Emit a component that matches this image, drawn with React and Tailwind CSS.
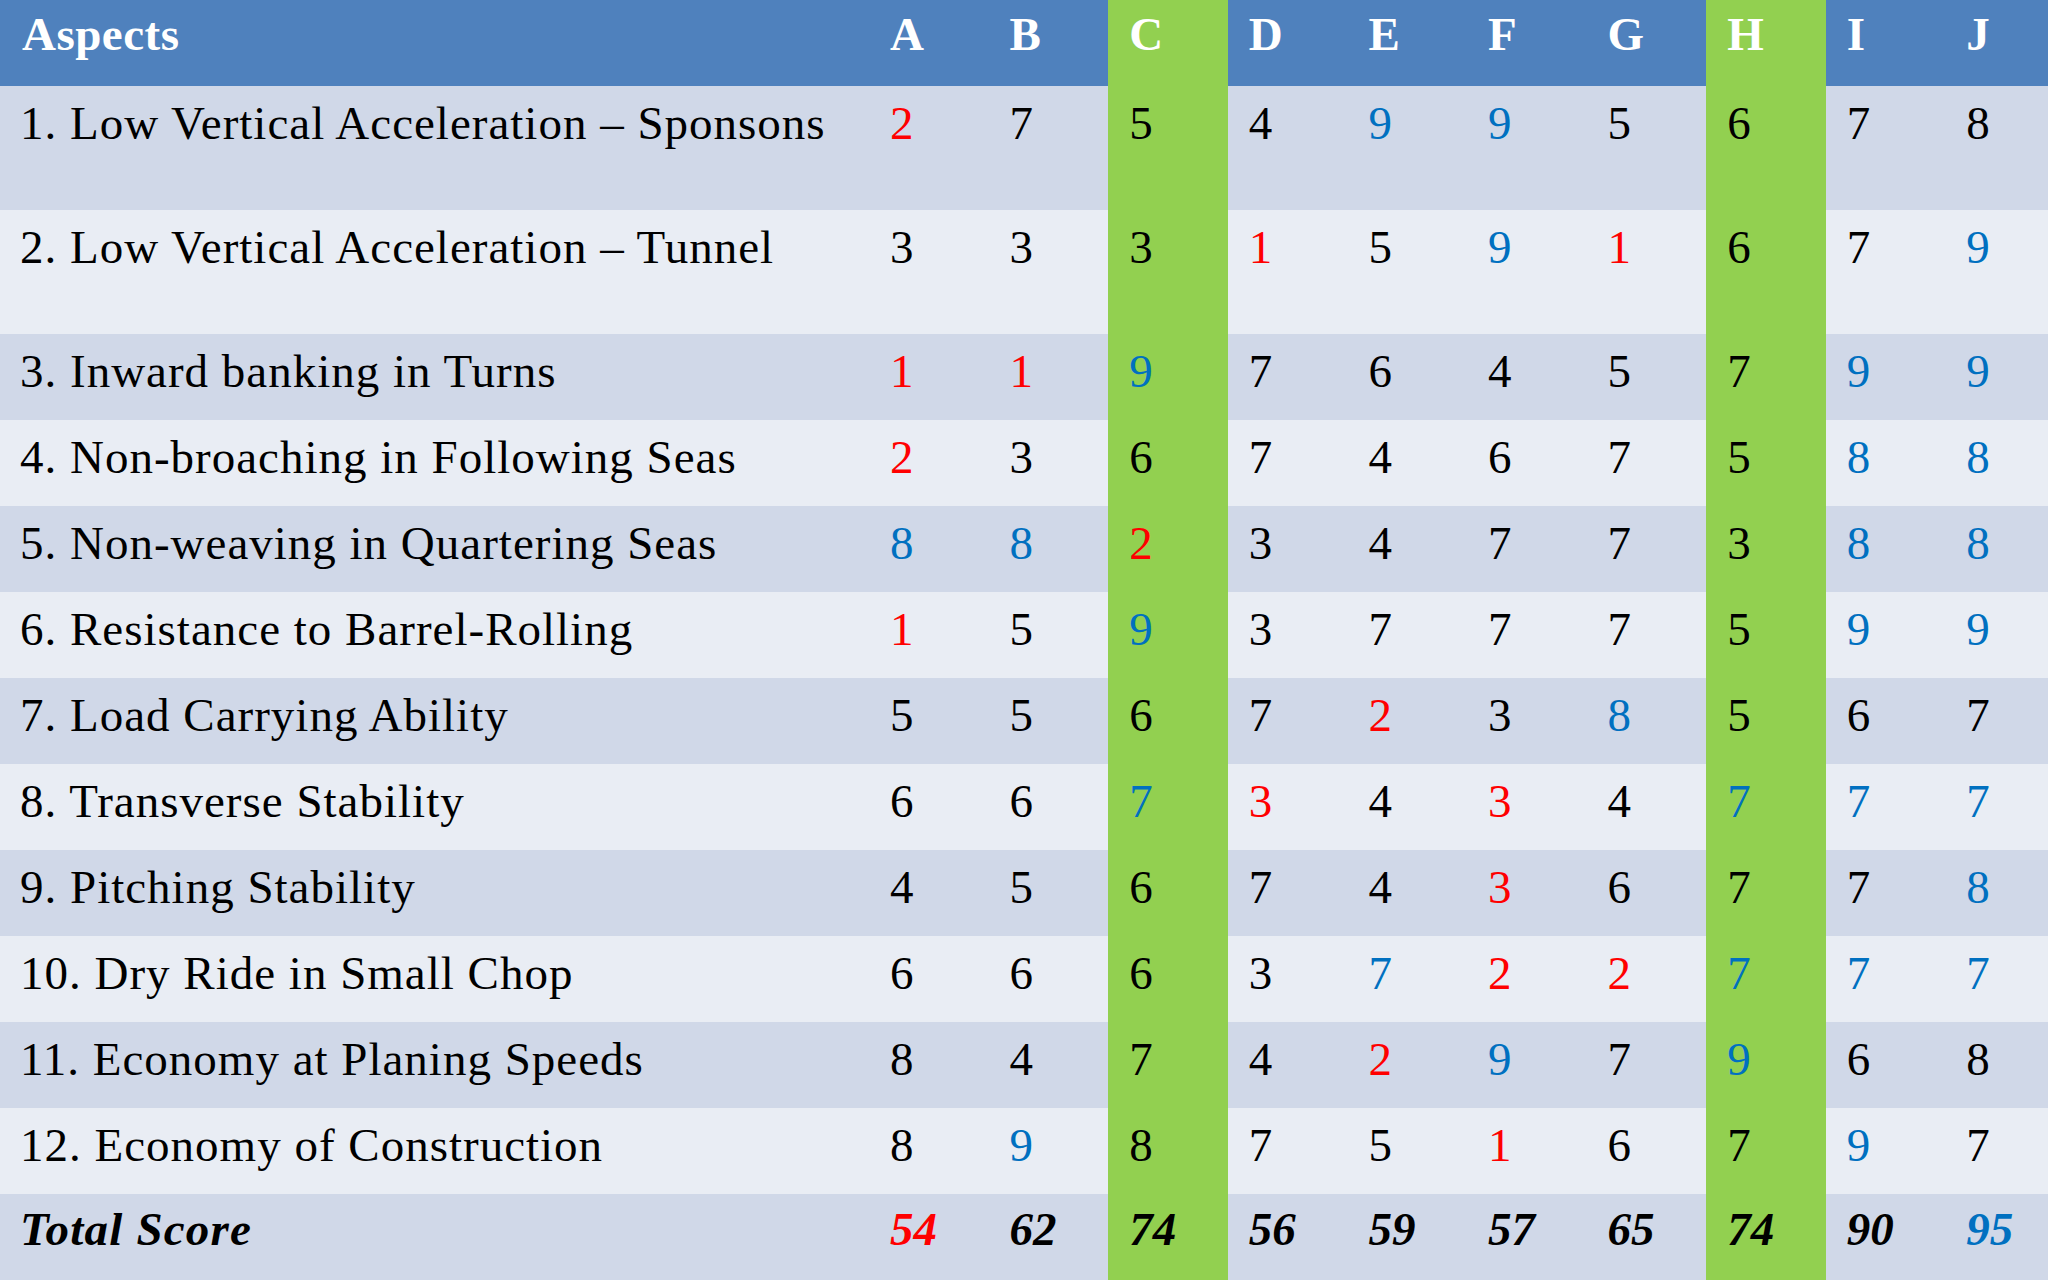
import React from 'react';

const R = 'r', B = 'b', K = 'k';

// each score: [value, colour]
const rows = [
    { label: '1. Low Vertical Acceleration – Sponsons', tall: true, s: [[2, R], [7, K], [5, K], [4, K], [9, B], [9, B], [5, K], [6, K], [7, K], [8, K]] },
    { label: '2. Low Vertical Acceleration – Tunnel', tall: true, s: [[3, K], [3, K], [3, K], [1, R], [5, K], [9, B], [1, R], [6, K], [7, K], [9, B]] },
    { label: '3. Inward banking in Turns', s: [[1, R], [1, R], [9, B], [7, K], [6, K], [4, K], [5, K], [7, K], [9, B], [9, B]] },
    { label: '4. Non-broaching in Following Seas', s: [[2, R], [3, K], [6, K], [7, K], [4, K], [6, K], [7, K], [5, K], [8, B], [8, B]] },
    { label: '5. Non-weaving in Quartering Seas', s: [[8, B], [8, B], [2, R], [3, K], [4, K], [7, K], [7, K], [3, K], [8, B], [8, B]] },
    { label: '6. Resistance to Barrel-Rolling', s: [[1, R], [5, K], [9, B], [3, K], [7, K], [7, K], [7, K], [5, K], [9, B], [9, B]] },
    { label: '7. Load Carrying Ability', s: [[5, K], [5, K], [6, K], [7, K], [2, R], [3, K], [8, B], [5, K], [6, K], [7, K]] },
    { label: '8. Transverse Stability', s: [[6, K], [6, K], [7, B], [3, R], [4, K], [3, R], [4, K], [7, B], [7, B], [7, B]] },
    { label: '9. Pitching Stability', s: [[4, K], [5, K], [6, K], [7, K], [4, K], [3, R], [6, K], [7, K], [7, K], [8, B]] },
    { label: '10. Dry Ride in Small Chop', s: [[6, K], [6, K], [6, K], [3, K], [7, B], [2, R], [2, R], [7, B], [7, B], [7, B]] },
    { label: '11. Economy at Planing Speeds', s: [[8, K], [4, K], [7, K], [4, K], [2, R], [9, B], [7, K], [9, B], [6, K], [8, K]] },
    { label: '12. Economy of Construction', s: [[8, K], [9, B], [8, K], [7, K], [5, K], [1, R], [6, K], [7, K], [9, B], [7, K]] },
];

const totals = [[54, R], [62, K], [74, K], [56, K], [59, K], [57, K], [65, K], [74, K], [90, K], [95, B]];
const letters = ['A', 'B', 'C', 'D', 'E', 'F', 'G', 'H', 'I', 'J'];
const green = [2, 7];

const colour = { r: 'text-[#ff0000]', b: 'text-[#0070c0]', k: 'text-black' };

const Row = ({ children, bg, h }) => (
    <div className={`grid grid-cols-[869px_repeat(10,119.6px)] ${bg} ${h}`}>{children}</div>
);

export default function App() {
    return (
        <div className="w-[2048px] h-[1280px] overflow-hidden bg-[#e9edf4] font-['Liberation_Serif',serif] text-[47px] leading-[47px]">
            <Row bg="bg-[#4f81bd]" h="h-[86px]">
                <div className="pl-[22px] pt-[11px] font-bold text-white tracking-[0.5px]">Aspects</div>
                {letters.map((l, i) => (
                    <div key={l} className={`pl-[21px] pt-[11px] font-bold text-white ${green.includes(i) ? 'bg-[#92d050]' : ''}`}>{l}</div>
                ))}
            </Row>
            {rows.map((r, ri) => (
                <Row key={r.label} bg={ri % 2 === 0 ? 'bg-[#d0d8e8]' : 'bg-[#e9edf4]'} h={r.tall ? 'h-[124px]' : 'h-[86px]'}>
                    <div className="pl-[20px] pt-[14px] text-black whitespace-nowrap tracking-[1px]">{r.label}</div>
                    {r.s.map(([v, c], i) => (
                        <div key={i} className={`pl-[21px] pt-[14px] ${colour[c]} ${green.includes(i) ? 'bg-[#92d050]' : ''}`}>{v}</div>
                    ))}
                </Row>
            ))}
            <Row bg="bg-[#d0d8e8]" h="h-[86px]">
                <div className="pl-[20px] pt-[12px] font-bold italic text-black tracking-[1.2px]">Total Score</div>
                {totals.map(([v, c], i) => (
                    <div key={i} className={`pl-[21px] pt-[12px] font-bold italic ${colour[c]} ${green.includes(i) ? 'bg-[#92d050]' : ''}`}>{v}</div>
                ))}
            </Row>
        </div>
    );
}
